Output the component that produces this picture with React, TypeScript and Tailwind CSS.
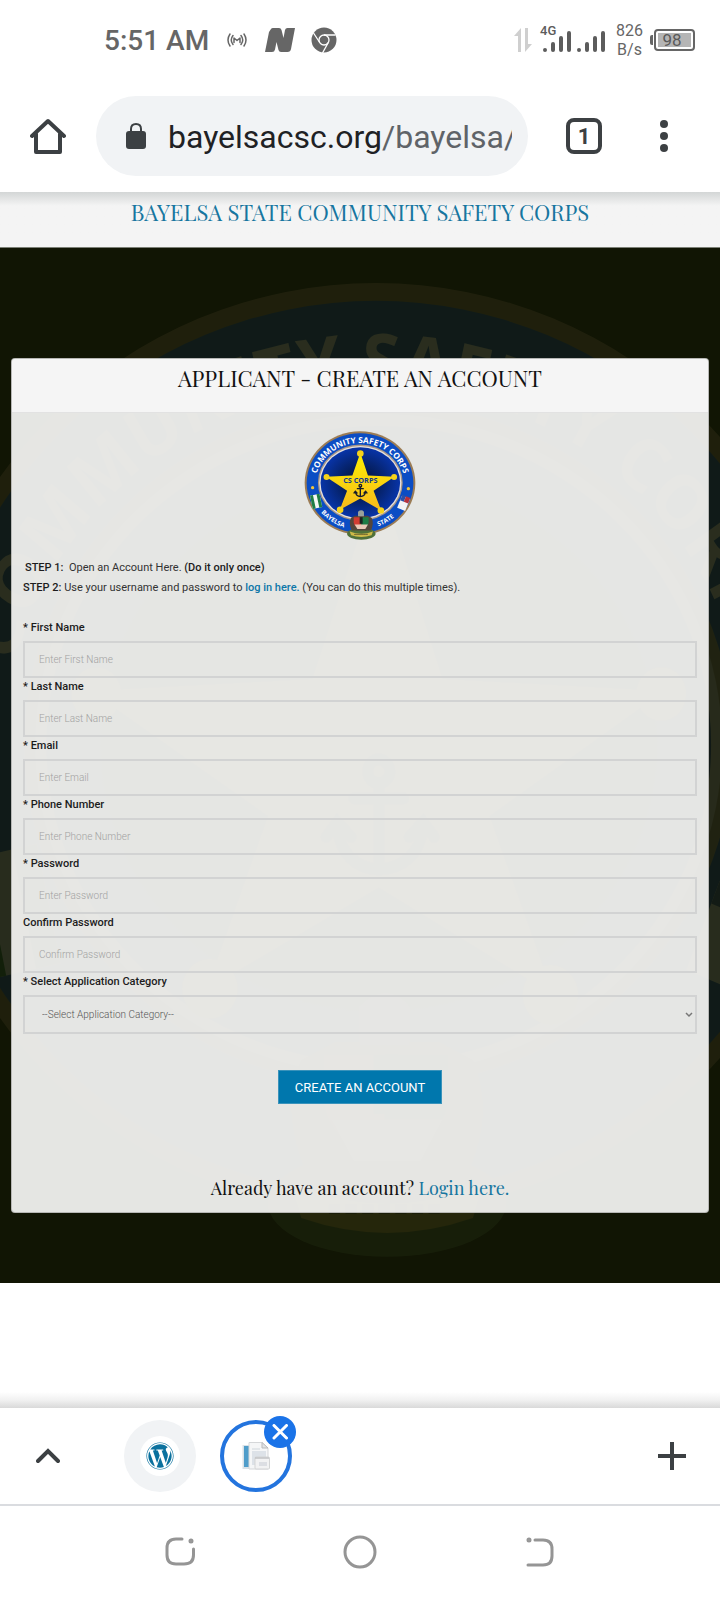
import { useId } from "react";
import { FaWordpress } from "react-icons/fa";

const fields = [
  { id: "first-name", label: "First Name", placeholder: "Enter First Name", type: "text", required: true },
  { id: "last-name", label: "Last Name", placeholder: "Enter Last Name", type: "text", required: true },
  { id: "email", label: "Email", placeholder: "Enter Email", type: "email", required: true },
  { id: "phone", label: "Phone Number", placeholder: "Enter Phone Number", type: "tel", required: true },
  { id: "password", label: "Password", placeholder: "Enter Password", type: "password", required: true },
  { id: "confirm", label: "Confirm Password", placeholder: "Confirm Password", type: "password", required: false },
];

const Emblem = ({ className, backdrop = false }: { className: string; backdrop?: boolean }) => {
  const id = useId();
  return (
    <svg viewBox="40 32 338 330" preserveAspectRatio="none" className={className} aria-hidden="true">
      <defs>
        <path id={`${id}top`} d="M74 192 A135 124 0 0 1 344 192" />
        <path id={`${id}left`} d="M58 188 A153 141 0 0 0 211 331" />
        <path id={`${id}right`} d="M211 329 A153 141 0 0 0 362 188" />
        <linearGradient id={`${id}star`} x1="0" y1="0" x2="0" y2="1">
          <stop offset="0" stopColor="#fdf000" />
          <stop offset="1" stopColor="#f7b91c" />
        </linearGradient>
        <radialGradient id={`${id}disc`}>
          <stop offset="0" stopColor="#03102f" />
          <stop offset="0.6" stopColor="#062573" />
          <stop offset="1" stopColor="#0834a8" />
        </radialGradient>
      </defs>
      <ellipse cx="209" cy="189" rx="167" ry="156" fill="#9b7c55" />
      <ellipse cx="209" cy="189" rx="161" ry="150" fill="#0b4dc4" />
      <ellipse cx="210" cy="188" rx="128" ry="115" fill="#a89788" />
      <ellipse cx="210" cy="188" rx="124" ry="111" fill="#e6e2df" />
      <ellipse cx="210" cy="188" rx="120" ry="107" fill={`url(#${id}disc)`} />
      <g fill={`url(#${id}star)`}>
        <path d="M210 98 L233 166 L313 170 L250 212 L273 272 L210 236 L148 270 L170 212 L106 170 L186 166 Z" />
      </g>
      <g fill="#f6d21a">
        <circle cx="210" cy="100" r="10" />
        <circle cx="312" cy="171" r="9" />
        <circle cx="108" cy="171" r="9" />
        <circle cx="272" cy="272" r="10" />
        <circle cx="149" cy="270" r="10" />
      </g>
      {/* anchor */}
      <g fill="none" stroke="#151a2c" strokeWidth="4" strokeLinecap="round">
        <circle cx="210" cy="197" r="4" />
        <path d="M210 201 V230 M201 206 H219 M195 216 Q197 229 210 230 Q224 229 226 216 M191 219 L195 214 L200 219 M221 219 L226 214 L230 219" />
      </g>
      <g fontFamily="'Open Sans', sans-serif" fontWeight="700" fill="#ffffff" textAnchor="middle">
        <text fontSize="25">
          <textPath href={`#${id}top`} startOffset="50%">COMMUNITY SAFETY CORPS</textPath>
        </text>
        {!backdrop && (
          <>
            <text x="210" y="188" fontSize="22" fill="#123a8c">CS CORPS</text>
            <text fontSize="19">
              <textPath href={`#${id}left`} startOffset="60%">BAYELSA</textPath>
            </text>
            <text fontSize="19">
              <textPath href={`#${id}right`} startOffset="36%">STATE</textPath>
            </text>
          </>
        )}
      </g>
      <circle cx="66" cy="203" r="5" fill="#f0c53a" />
      <circle cx="355" cy="206" r="5" fill="#f0c53a" />
      {/* flags */}
      <g transform="rotate(-12 76 244)">
        <rect x="62" y="224" width="29" height="41" fill="#f4f6f4" />
        <path d="M62 224 h9 v41 h-9 z M82 224 h9 v41 h-9 z" fill="#1e7d45" />
      </g>
      <g transform="rotate(22 341 249)">
        <rect x="328" y="230" width="26" height="40" fill="#f3f3f5" />
        <rect x="328" y="228" width="12" height="18" fill="#2b50a8" />
        <rect x="340" y="228" width="14" height="18" fill="#b5323d" />
      </g>
      {/* coat of arms */}
      <ellipse cx="213" cy="342" rx="43" ry="18" fill="#50713a" />
      <path d="M182 294 q-8 16 2 38 h58 q10-20 2-38 l-12-6 h-38 z" fill="#53463b" />
      <path d="M203 276 q10-9 18 0 v13 h-18 z" fill="#9aa09b" />
      <path d="M190 292 h22 v36 q-20-6-22-20 z" fill="#d23c32" />
      <path d="M212 292 h23 v16 q-2 14-23 20 z" fill="#1d7c46" />
      <path d="M208 292 h9 v20 h-9 z" fill="#1d2522" />
      <path d="M193 314 h40 l-8 14 h-24 z" fill="#e9c9b8" />
      <path d="M178 335 q35 14 70 0 l-4 12 q-31 10-62 0 z" fill="#cfba48" />
      <path d="M192 344 h42" stroke="#4c4526" strokeWidth="3" strokeDasharray="4 2" />
    </svg>
  );
};

const StatusBar = () => {
  return (
    <div className="flex h-20 items-center pr-[25px] pl-[104px] text-[#666666]">
      <span className="pt-[2px] text-[28px] font-medium">5:51 AM</span>
      <svg className="ml-[18px] h-[14px] w-5" viewBox="0 0 20 14" fill="none" stroke="#666666" strokeWidth="1.5" strokeLinecap="round" strokeLinejoin="round">
        <path d="M3 1 Q-1 7 3 13 M6 2.5 Q2.500 7 6 11.500 M17 1 Q21 7 17 13 M14 2.500 Q17.500 7 14 11.500 M7 9.500 V5 L10 7.500 L13 5 V9.500" />
      </svg>
      <svg className="ml-[18px] h-6 w-[30px]" viewBox="0 0 30 24" fill="#666666">
        <path d="M6 1 Q6.500 0 8 0 H14 Q16 0 16.500 2 L18.500 10 L20 2 Q20.500 0 22.500 0 H30 L26 21 Q25.500 24 22.500 24 H16 Q14 24 13.500 22 L11.500 14 L10 21.500 Q9.500 24 7 24 H0 L4 4 Z" />
      </svg>
      <svg className="ml-4 h-[26px] w-[26px]" viewBox="0 0 26 26">
        <circle cx="13" cy="13" r="12.500" fill="#666666" />
        <g fill="none" stroke="#ffffff" strokeWidth="1.300">
          <circle cx="13" cy="13" r="5" />
          <path d="M13 8 H24.500 M8.700 15.500 L2.500 6 M17.300 15.500 L11.500 26" />
        </g>
      </svg>
      <svg className="ml-auto h-6 w-[18px]" viewBox="0 0 18 24" fill="#cfcfcf">
        <path d="M7 0 V24 H4 V8 H0 Z M11 0 H14 V16 H18 L11 24 Z" />
      </svg>
      <svg className="ml-2 h-7 w-[66px] overflow-visible" viewBox="0 0 66 28" fill="#5c5c5c">
        <text x="0" y="9" fontSize="13" fontWeight="500">4G</text>
        <g stroke="#5c5c5c" strokeWidth="4" strokeLinecap="round">
          <path d="M5 24 v0.100 M13 18 V24 M21 12 V24 M29 7 V24 M39 24 v0.100 M47 18 V24 M55 12 V24 M63 7 V24" />
        </g>
      </svg>
      <div className="ml-[10px] text-center text-base leading-[19px]">
        <p>826</p>
        <p>B/s</p>
      </div>
      <svg className="ml-[7px] h-[22px] w-[45px]" viewBox="0 0 45 22">
        <path d="M3 6 H2 Q0 6 0 8 V14 Q0 16 2 16 H3 Z" fill="#666666" />
        <rect x="5" y="1" width="39" height="20" rx="3" fill="#ffffff" stroke="#666666" strokeWidth="2" />
        <rect x="8" y="4" width="33" height="14" fill="#b5b5b5" />
        <text x="22" y="17" fontSize="17" textAnchor="middle" fill="#5a5a5a">98</text>
      </svg>
    </div>
  );
};

const Toolbar = () => {
  return (
    <div className="flex items-center py-4 pl-[30px]">
      <button type="button" aria-label="Home">
        <svg className="h-9 w-9" viewBox="0 0 36 36" fill="none" stroke="#3c4043" strokeWidth="4" strokeLinecap="round" strokeLinejoin="round">
          <path d="M2 18 L18 3 L34 18" />
          <path d="M6 16 V34 H30 V16" />
        </svg>
      </button>
      <button type="button" className="ml-[30px] flex h-20 min-w-0 flex-1 items-center rounded-full bg-[#f1f3f5] pr-4 pl-[30px] text-left">
        <svg className="h-[26px] w-5 shrink-0" viewBox="0 0 20 26">
          <rect x="0" y="8" width="20" height="18" rx="3" fill="#3c4043" />
          <path d="M5 9 V6 Q5 1 10 1 Q15 1 15 6 V9" fill="none" stroke="#3c4043" strokeWidth="2" />
        </svg>
        <span className="ml-[22px] flex-1 overflow-hidden pt-[2px] text-[32px] whitespace-nowrap text-[#202124]">
          bayelsacsc.org<span className="text-[#5f6368]">/bayelsa/</span>
        </span>
      </button>
      <button type="button" aria-label="Tabs" className="ml-[38px] flex h-9 w-9 items-center justify-center rounded-lg border-4 border-[#3c4043] text-[22px] font-bold text-[#3c4043]">
        1
      </button>
      <button type="button" aria-label="Menu" className="mr-2 ml-[14px] flex w-24 justify-center">
        <svg className="h-8 w-2" viewBox="0 0 8 32" fill="#3c4043">
          <circle cx="4" cy="4" r="4" />
          <circle cx="4" cy="16" r="4" />
          <circle cx="4" cy="28" r="4" />
        </svg>
      </button>
    </div>
  );
};

const SignupForm = () => {
  return (
    <form className="px-[11px] pb-3">
      {fields.map((field) => (
        <div key={field.id}>
          <label htmlFor={field.id} className="block pb-1 text-[11px] leading-[18px] font-medium text-[#1c1c1c]">
            {field.required && "* "}
            {field.label}
          </label>
          <input
            id={field.id}
            type={field.type}
            placeholder={field.placeholder}
            className="block h-[37px] w-full border-2 border-[#d2d3d3] bg-transparent px-[14px] text-[10px] font-light text-[#444444] placeholder:text-[#a2a2a2]"
          />
        </div>
      ))}
      <label htmlFor="category" className="block pb-1 text-[11px] leading-[18px] font-medium text-[#1c1c1c]">
        * Select Application Category
      </label>
      <div className="relative">
        <select id="category" className="block h-[39px] w-full appearance-none border-2 border-[#d2d3d3] bg-transparent px-[17px] text-[10px] font-light text-[#555555]">
          <option>--Select Application Category--</option>
        </select>
        <svg className="pointer-events-none absolute top-4 right-1 h-2 w-2" viewBox="0 0 8 8" fill="none" stroke="#777777" strokeWidth="1.500">
          <path d="M1 2 L4 5 L7 2" />
        </svg>
      </div>
      <div className="mt-9 flex justify-center">
        <button type="submit" className="h-[34px] border border-[#3a93bb] bg-[#0077ad] px-4 text-[13px] text-white">
          CREATE AN ACCOUNT
        </button>
      </div>
      <p className="mt-[72px] text-center font-['Playfair_Display','Liberation_Serif',serif] text-lg leading-6 text-[#111111]">
        Already have an account? <a href="#login" className="text-[#1776a0]">Login here.</a>
      </p>
    </form>
  );
};

const TabStrip = () => {
  return (
    <div className="flex h-24 items-center bg-white pr-[34px] pl-9">
      <button type="button" aria-label="Expand">
        <svg className="h-4 w-6" viewBox="0 0 24 16" fill="none" stroke="#3c4043" strokeWidth="4" strokeLinecap="round">
          <path d="M2 13 L12 3 L22 13" />
        </svg>
      </button>
      <button type="button" aria-label="WordPress tab" className="ml-16 flex h-[72px] w-[72px] items-center justify-center rounded-full bg-[#f1f3f5]">
        <span className="flex h-10 w-10 items-center justify-center rounded-full bg-white">
          <FaWordpress size={28} color="#0b719e" />
        </span>
      </button>
      <div className="relative ml-6">
        <button type="button" aria-label="Current tab" className="flex h-[72px] w-[72px] items-center justify-center rounded-full border-4 border-[#2374de]">
          <svg className="h-7 w-7" viewBox="0 0 28 28">
            <rect x="0.500" y="3" width="8" height="24" fill="#d9e2e8" />
            <rect x="2" y="4" width="5" height="21" fill="#4f9dca" />
            <path d="M7 0.500 H20 L26 6 V27 H7 Z" fill="#f5f6f7" stroke="#d5d7d9" />
            <path d="M20 0.500 V6 H26 Z" fill="#e2e3e4" stroke="#b9bbbd" />
            <path d="M10 7 H18 M10 11 H22" stroke="#e2e6e9" strokeWidth="2" />
            <rect x="10" y="9" width="14" height="14" fill="#dde2e8" />
            <rect x="13" y="15" width="14.500" height="12" rx="1" fill="#f2f2f3" stroke="#d3d4d5" />
            <path d="M13 16 H27" stroke="#c0c2c4" strokeWidth="1.500" />
            <rect x="17" y="20" width="8" height="4" fill="#dcdee3" />
          </svg>
        </button>
        <button type="button" aria-label="Close tab" className="absolute -top-1 -right-1 flex h-8 w-8 items-center justify-center rounded-full bg-[#1a73e8]">
          <svg className="h-4 w-4" viewBox="0 0 16 16" stroke="#ffffff" strokeWidth="3" strokeLinecap="round">
            <path d="M2 1.500 L14.500 14 M14.500 1.500 L2 14" />
          </svg>
        </button>
      </div>
      <button type="button" aria-label="New tab" className="ml-auto">
        <svg className="h-7 w-7" viewBox="0 0 28 28" stroke="#3c4043" strokeWidth="4">
          <path d="M14 0 V28 M0 14 H28" />
        </svg>
      </button>
    </div>
  );
};

const NavBar = () => {
  return (
    <nav className="grid h-24 grid-cols-3 place-items-center border-t-2 border-[#dadce0] bg-white px-[12.5%] pb-[2px]">
      <button type="button" aria-label="Recent apps">
        <svg className="h-[30px] w-[30px]" viewBox="0 0 30 30" fill="none" stroke="#959595" strokeWidth="3" strokeLinecap="round">
          <path d="M17 2 H11 Q2 2 2 11 V18 Q2 27 11 27 H19 Q28.500 27 28.500 18 V12" />
          <circle cx="26" cy="4" r="1" fill="#959595" />
        </svg>
      </button>
      <button type="button" aria-label="Home screen">
        <svg className="h-[34px] w-[34px]" viewBox="0 0 34 34" fill="none" stroke="#959595" strokeWidth="3">
          <circle cx="17" cy="17" r="15" />
        </svg>
      </button>
      <button type="button" aria-label="Back">
        <svg className="h-[30px] w-[30px]" viewBox="0 0 30 30" fill="none" stroke="#959595" strokeWidth="3" strokeLinecap="round">
          <path d="M10 3 H18 Q27 3 27 12 V19 Q27 28 18 28 H3" />
          <circle cx="4" cy="3" r="1" fill="#959595" />
        </svg>
      </button>
    </nav>
  );
};

export default function App() {
  return (
    <div className="flex min-h-screen flex-col bg-white font-[Roboto,sans-serif]">
      <StatusBar />
      <Toolbar />

      {/* Site header */}
      <header className="h-[56px] border-b border-[#7b7f75] bg-linear-to-b from-[#d3d6d6] to-[#f4f4f4] to-25% pt-[7px] text-center">
        <h1 className="font-['Playfair_Display','Liberation_Serif',serif] text-[22px] leading-[27px] text-[#1776a0]">
          BAYELSA STATE COMMUNITY SAFETY CORPS
        </h1>
      </header>

      {/* Sign up card over the dimmed emblem */}
      <main className="relative overflow-hidden bg-[#111504] px-[11px] pt-[110px] pb-[70px]">
        <Emblem backdrop className="absolute top-8 left-1/2 ml-4 aspect-[20/21] w-[130%] max-w-none -translate-x-1/2 opacity-[0.1]" />
        <section className="relative overflow-hidden rounded border border-black/20 bg-[#f1f1ef]/95">
          <h2 className="h-[54px] border-b border-[#e2e2e2] bg-[#f5f5f5] pt-[6px] text-center font-['Playfair_Display','Liberation_Serif',serif] text-[22px] leading-[27px] text-[#111111]">
            APPLICANT - CREATE AN ACCOUNT
          </h2>
          <Emblem className="mx-auto mt-[18px] w-28" />
          <div className="mt-[18px] mb-[21px] px-[11px] text-[11px] leading-5 text-[#333333]">
            <p className="pl-[2px]">
              <strong className="font-medium text-[#1c1c1c]">STEP 1:</strong>&nbsp; Open an Account Here. <strong className="font-medium text-[#1c1c1c]">(Do it only once)</strong>
            </p>
            <p>
              <strong className="font-medium text-[#1c1c1c]">STEP 2:</strong> Use your username and password to{" "}
              <a href="#login" className="font-medium text-[#0e77a8]">log in here.</a> (You can do this multiple times).
            </p>
          </div>
          <SignupForm />
        </section>
      </main>

      {/* Bottom browser bar */}
      <div className="mt-auto">
        <div className="h-4 bg-linear-to-b from-white via-[#f1f1f1] to-[#d9d9d9]" />
        <TabStrip />
        <NavBar />
      </div>
    </div>
  );
}
